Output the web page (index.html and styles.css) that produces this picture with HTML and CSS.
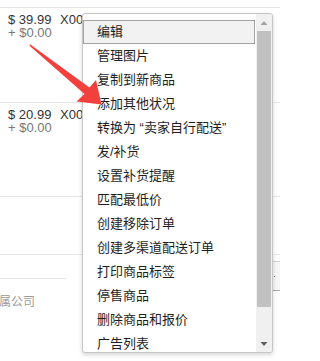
FILE: index.html
```html
<!DOCTYPE html>
<html lang="zh-CN">
<head>
<meta charset="utf-8">
<title>商品操作菜单</title>
<link rel="stylesheet" href="styles.css">
</head>
<body>
<div class="page">
  <div class="row row-first">
    <div class="price">
      <div class="amount">$ 39.99</div>
      <div class="ship">+ $0.00</div>
    </div>
    <div class="sku">X002ABCD</div>
  </div>
  <div class="row row-second">
    <div class="price">
      <div class="amount">$ 20.99</div>
      <div class="ship">+ $0.00</div>
    </div>
    <div class="sku">X002EFGH</div>
  </div>
  <div class="row row-third"></div>
  <div class="row-bottom">
    <div class="filter">
      <div class="field"></div>
      <div class="label">所属公司</div>
    </div>
    <div class="side-btn"><span class="side-dot"></span></div>
  </div>
</div>

<div class="menu">
  <ul class="menu-list">
    <li class="menu-item active">编辑</li>
    <li class="menu-item">管理图片</li>
    <li class="menu-item">复制到新商品</li>
    <li class="menu-item">添加其他状况</li>
    <li class="menu-item">转换为 “卖家自行配送”</li>
    <li class="menu-item">发/补货</li>
    <li class="menu-item">设置补货提醒</li>
    <li class="menu-item">匹配最低价</li>
    <li class="menu-item">创建移除订单</li>
    <li class="menu-item">创建多渠道配送订单</li>
    <li class="menu-item">打印商品标签</li>
    <li class="menu-item">停售商品</li>
    <li class="menu-item">删除商品和报价</li>
    <li class="menu-item">广告列表</li>
  </ul>
  <div class="scrollbar">
    <div class="sb-btn"><svg width="16" height="16" viewBox="0 0 16 16"><polygon points="4.5,11 8,7 11.5,11" fill="#a3a3a3"/></svg></div>
    <div class="sb-track"><div class="sb-thumb"></div></div>
    <div class="sb-btn"><svg width="16" height="16" viewBox="0 0 16 16"><polygon points="4.5,6 11.5,6 8,10" fill="#606060"/></svg></div>
  </div>
</div>

<svg class="arrow" width="280" height="361" viewBox="0 0 280 361">
  <polygon points="30,44.3 89.5,87.5 96,80 101.5,104.5 76.5,101.5 84.5,94 29.5,45.7" fill="#f2403c"/>
</svg>
</body>
</html>
```

FILE: styles.css
```css
html {
  overflow: hidden;
}

html, body {
  margin: 0;
  padding: 0;
  background: #ffffff;
}

body {
  width: 280px;
  height: 361px;
  overflow: hidden;
  position: relative;
  font-family: "Liberation Sans", "Noto Sans CJK SC", sans-serif;
}

.page {
  width: 280px;
  padding-top: 7px;
  overflow: hidden;
}

.row {
  display: flex;
  border-top: 1px solid #e6e6e6;
  box-sizing: border-box;
}

.row-first {
  height: 95px;
}

.row-second {
  height: 94px;
}

.row-third {
  height: 59px;
  border-bottom: 1px solid #e6e6e6;
}

.price {
  width: 52px;
  padding-left: 8px;
  padding-top: 5px;
  font-size: 13px;
  line-height: 13px;
}

.amount {
  color: #333333;
}

.ship {
  color: #777777;
}

.sku {
  width: 22px;
  overflow: hidden;
  padding-top: 5px;
  font-size: 13px;
  line-height: 13px;
  color: #333333;
  white-space: nowrap;
}

.row-bottom {
  display: flex;
  justify-content: space-between;
}

.filter {
  display: flex;
  flex-direction: column;
}

.field {
  width: 66px;
  height: 23px;
  border-bottom: 1px solid #e6e6e6;
}

.label {
  margin-top: 15px;
  margin-left: -13px;
  font-family: "Noto Sans CJK SC", sans-serif;
  font-size: 12px;
  line-height: 14px;
  color: #9a9a9a;
  white-space: nowrap;
}

.side-btn {
  margin-top: 6px;
  width: 9px;
  height: 30px;
  box-sizing: border-box;
  background: #f6f6f6;
  border: 1px solid #d0d0d0;
  border-right: none;
  border-bottom-color: #a8a8a8;
  border-radius: 2px 0 0 2px;
  display: flex;
  align-items: center;
  padding-left: 2px;
}

.side-dot {
  width: 1px;
  height: 1px;
  background: #888888;
}

.menu {
  position: absolute;
  left: 82px;
  top: 13px;
  width: 191px;
  height: 340px;
  box-sizing: border-box;
  display: flex;
  background: #ffffff;
  border: 1px solid #c6c6c6;
  border-radius: 3px;
  box-shadow: 0 2px 4px rgba(0, 0, 0, 0.16);
  overflow: hidden;
}

.menu-list {
  list-style: none;
  margin: 0;
  padding: 6px 0 0 0;
  width: 173px;
  overflow: hidden;
  font-family: "Liberation Sans", "Noto Sans CJK SC", sans-serif;
  font-size: 13px;
  color: #1e1e1e;
}

.menu-item {
  height: 24px;
  line-height: 24px;
  padding-left: 14px;
  white-space: nowrap;
  box-sizing: border-box;
}

.menu-item.active {
  width: 172px;
  padding-left: 13px;
  line-height: 22px;
  background: #f2f2f2;
  border: 1px solid #a2a2a2;
}

.scrollbar {
  width: 16px;
  display: flex;
  flex-direction: column;
  background: #f0f0f0;
}

.sb-btn {
  height: 16px;
  flex: none;
}

.sb-btn svg {
  display: block;
}

.sb-track {
  flex: 1;
  padding-top: 1px;
}

.sb-thumb {
  margin: 0 1px;
  height: 276px;
  background: #c1c1c1;
}

.arrow {
  position: absolute;
  left: 0;
  top: 0;
  pointer-events: none;
}
```
